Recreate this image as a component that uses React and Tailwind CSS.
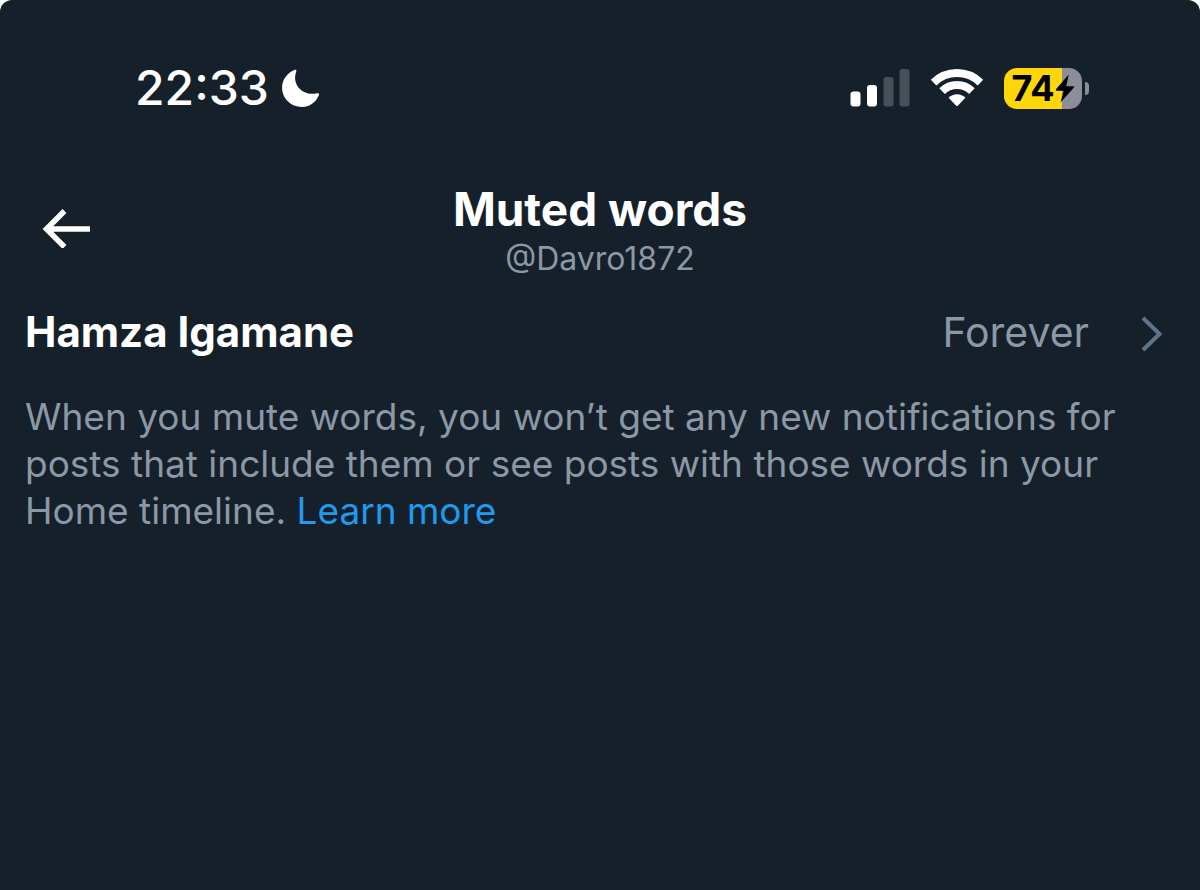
function Moon() {
  return (
    <svg className="h-10 w-10" viewBox="0 0 40 40" fill="#fff" aria-hidden="true">
      <path d="M14 1.800C15 1.400 15.700 2.200 15.300 3.200C13.900 7 13.700 11 14.800 14.400C17.500 22.500 26 27.500 35.800 25.300C37.400 25 38.600 25.700 38 27C35 34.300 28.300 39 20.900 39C10 39 1.100 30.500 1.100 19.800C1.100 11.800 6 4.900 14 1.800Z" />
    </svg>
  );
}

function Signal() {
  return (
    <svg className="h-10 w-[60px]" viewBox="0 0 60 40" aria-hidden="true">
      <rect x="0.500" y="23.500" width="10" height="15" rx="3" fill="#fff" />
      <rect x="17" y="17" width="10" height="21.500" rx="3" fill="#fff" />
      <rect x="33.500" y="9" width="10" height="29.500" rx="3" fill="#474f59" />
      <rect x="49.500" y="1" width="10" height="37.500" rx="3" fill="#474f59" />
    </svg>
  );
}

function Wifi() {
  return (
    <svg className="h-10 w-[54px]" viewBox="0 0 54 40" fill="none" stroke="#fff" strokeWidth="8" aria-hidden="true">
      <path d="M3.600 14.600A33.300 33.300 0 0 1 50.400 14.600" />
      <path d="M12.100 23.100A21.200 21.200 0 0 1 41.900 23.100" />
      <path d="M18.600 29.700A11.800 11.800 0 0 1 35.400 29.700L28 37.400Q27 38.400 26 37.400Z" fill="#fff" stroke="none" />
    </svg>
  );
}

function Battery() {
  return (
    <div className="flex items-center gap-[3px]" role="img" aria-label="Battery 74%, charging">
      <div className="flex h-[41px] w-[78px] items-center justify-center overflow-hidden rounded-[13px] bg-[linear-gradient(90deg,#ffd60a_74%,#8b8e98_74%)]">
        <span className="text-[36px] leading-none font-bold text-black">74</span>
        <svg className="h-[29px] w-5" viewBox="0 0 18 27" aria-hidden="true">
          <path d="M12.500 0.500L0.600 14.300Q0 15.500 1.200 15.500H7.800L4.800 26.500L17.300 12.600Q18 11.400 16.700 11.400H10.100Z" fill="#000" />
        </svg>
      </div>
      <div className="h-[13px] w-1 rounded-r-full bg-[#8b8e98]" />
    </div>
  );
}

export default function App() {
  return (
    <div className="min-h-screen bg-white">
      <div className="min-h-screen rounded-t-xl bg-[#16202a] font-['Inter',sans-serif]">
        <div className="flex h-[176px] items-center justify-between pr-[111px] pl-[135px]">
          <div className="flex items-center gap-3">
            <span className="text-[48px] leading-none font-medium text-white">22:33</span>
            <Moon />
          </div>
          <div className="flex items-center gap-5">
            <Signal />
            <Wifi />
            <Battery />
          </div>
        </div>

        <header className="grid grid-cols-[1fr_auto_1fr] items-center px-[42px] pt-0.5">
          <button type="button" aria-label="Back" className="justify-self-start">
            <svg className="h-10 w-12" viewBox="0 0 48 40" fill="none" stroke="#fff" strokeWidth="5.500" aria-hidden="true">
              <path d="M22.500 3L4.500 21L22.500 39M4.500 21H48" />
            </svg>
          </button>
          <div className="text-center">
            <h1 className="text-[46px] leading-[62px] font-bold text-white">Muted words</h1>
            <p className="text-[32px] leading-[38px] text-[#8b98a5]">@Davro1872</p>
          </div>
        </header>

        <main className="px-[25px] pt-[26px]">
          <button type="button" className="flex w-full items-center justify-between pr-3 text-left">
            <span className="text-[42px] leading-[56px] font-bold text-white">Hamza Igamane</span>
            <span className="flex items-center gap-[52px]">
              <span className="text-[41px] leading-[56px] text-[#8b98a5]">Forever</span>
              <svg className="h-10 w-[22px]" viewBox="0 0 22 40" fill="none" stroke="#5f7488" strokeWidth="4" aria-hidden="true">
                <path d="M2 6L18.500 22L2 38" />
              </svg>
            </span>
          </button>
          <p className="pt-[33px] text-[37px] leading-[47px] text-[#8b98a5]">
            When you mute words, you won’t get any new notifications for posts that include them or see posts with
            those words in your Home timeline.{" "}
            <a href="#learn-more" className="text-[#1d9bf0]">Learn more</a>
          </p>
        </main>
      </div>
    </div>
  );
}
